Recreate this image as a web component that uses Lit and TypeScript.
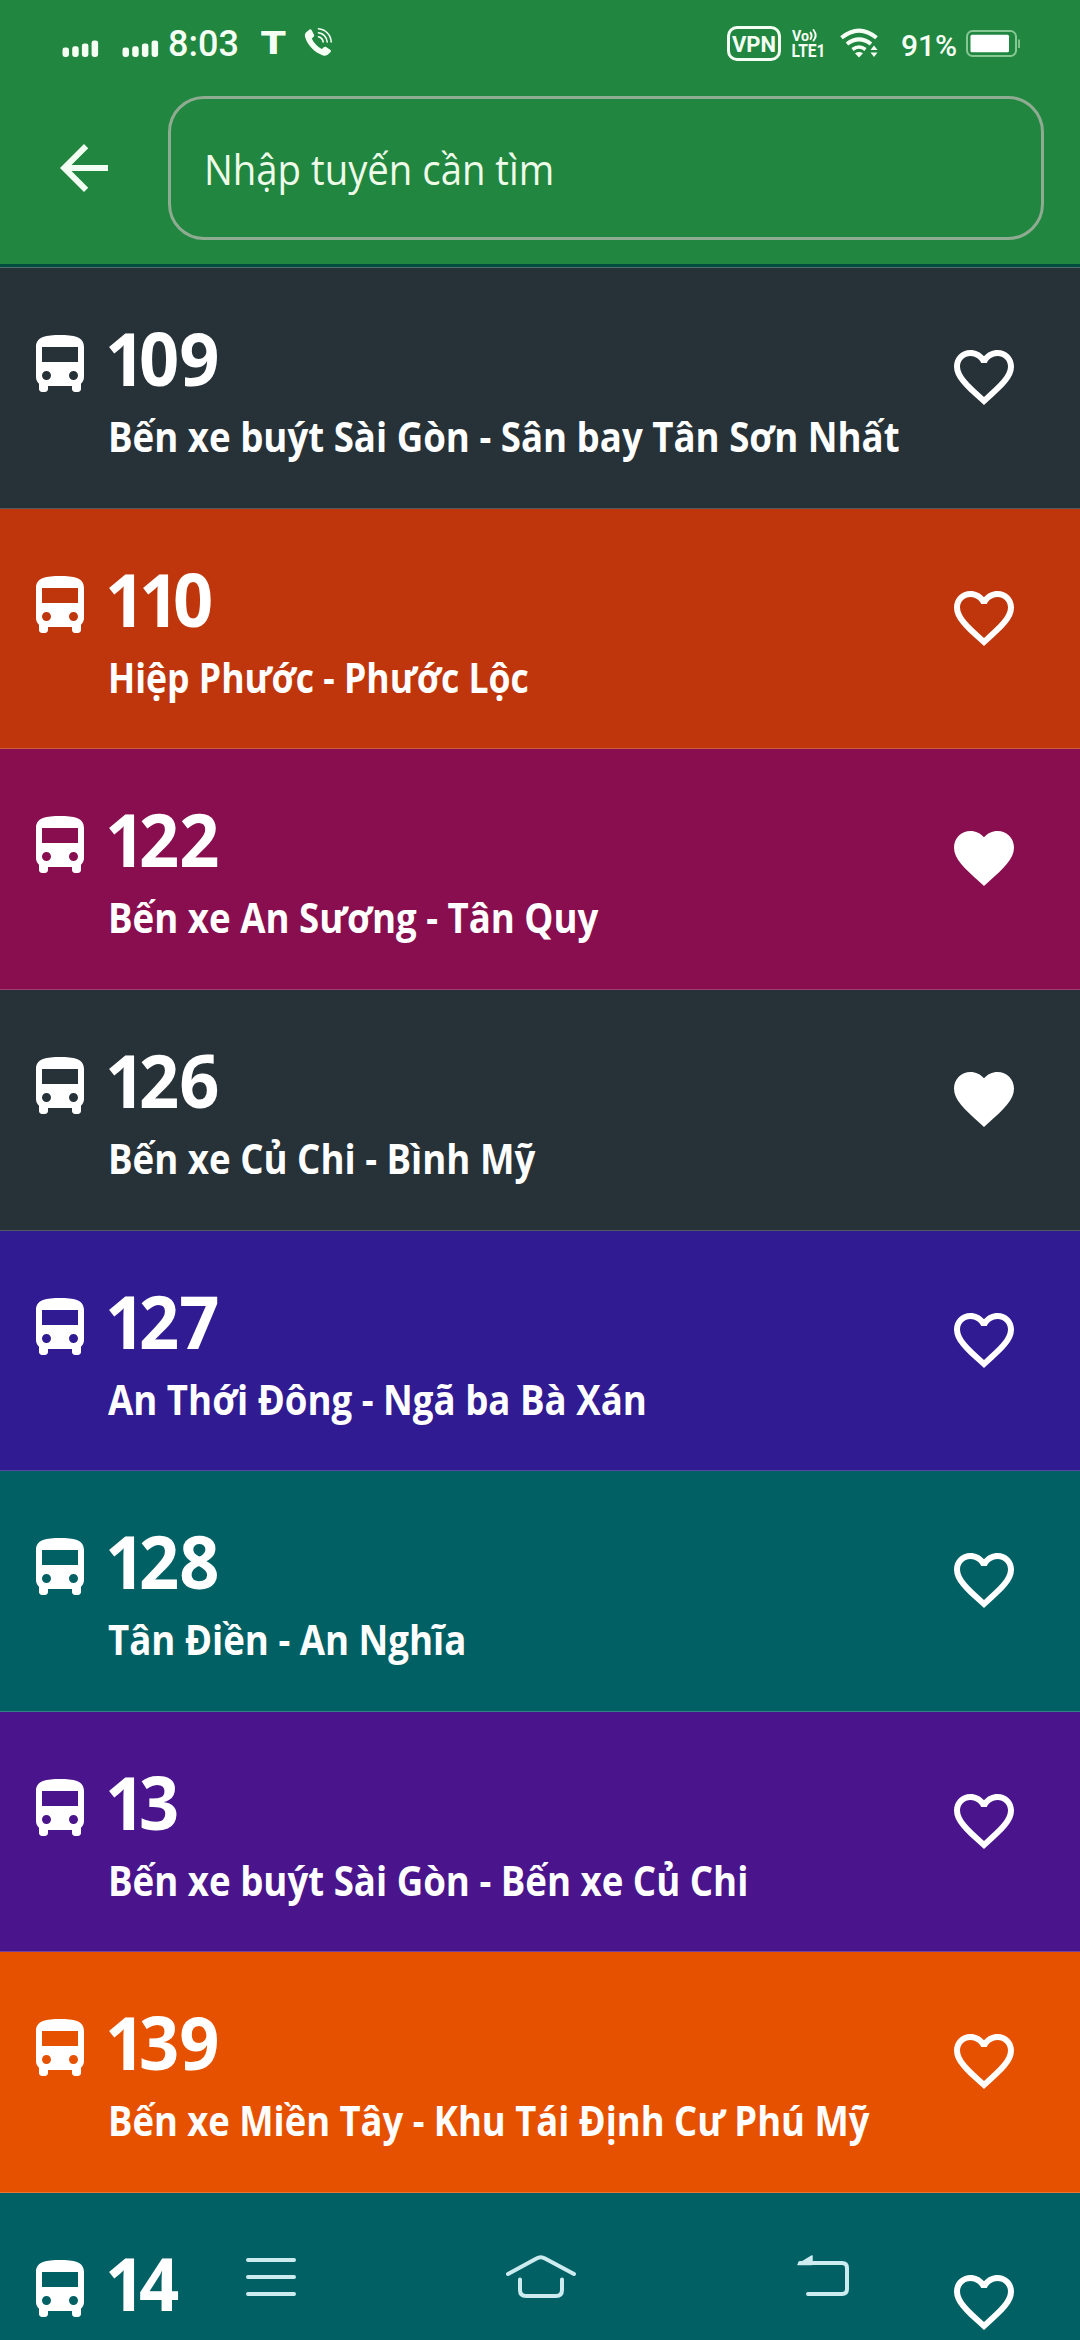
import { LitElement, html, css } from "lit";
import { customElement, property } from "lit/decorators.js";
import { styleMap } from "lit/directives/style-map.js";

interface Route {
  code: string;
  name: string;
  tone: string;
  liked?: boolean;
  stretch?: number;
}

const ROUTES: Route[] = [
  { code: "109", name: "Bến xe buýt Sài Gòn - Sân bay Tân Sơn Nhất", tone: "slate" },
  { code: "110", name: "Hiệp Phước - Phước Lộc", tone: "rust", stretch: 0.847 },
  { code: "122", name: "Bến xe An Sương - Tân Quy", tone: "wine", liked: true },
  { code: "126", name: "Bến xe Củ Chi - Bình Mỹ", tone: "slate", liked: true },
  { code: "127", name: "An Thới Đông - Ngã ba Bà Xán", tone: "indigo" },
  { code: "128", name: "Tân Điền - An Nghĩa", tone: "teal" },
  { code: "13", name: "Bến xe buýt Sài Gòn - Bến xe Củ Chi", tone: "purple" },
  { code: "139", name: "Bến xe Miền Tây - Khu Tái Định Cư Phú Mỹ", tone: "orange", stretch: 0.866 },
  { code: "14", name: "", tone: "teal" },
];

const HEART =
  "M12 21.35l-1.45-1.32C5.4 15.36 2 12.28 2 8.5 2 5.42 4.42 3 7.5 3c1.74 0 3.41.81 4.5 2.09C13.09 3.81 14.76 3 16.5 3 19.58 3 22 5.42 22 8.5c0 3.78-3.4 6.86-8.55 11.54L12 21.35z";
const HEART_OUTLINE =
  "M16.5 3c-1.74 0-3.41.81-4.5 2.09C10.91 3.81 9.24 3 7.5 3 4.42 3 2 5.42 2 8.5c0 3.78 3.4 6.86 8.55 11.54L12 21.35l1.45-1.32C18.6 15.36 22 12.28 22 8.5 22 5.42 19.58 3 16.5 3zm-4.4 15.55l-.1.1-.1-.1C7.14 14.24 4 11.39 4 8.5 4 6.5 5.5 5 7.5 5c1.54 0 3.04.99 3.57 2.36h1.87C13.46 5.99 14.96 5 16.5 5c2 0 3.5 1.5 3.5 3.5 0 2.89-3.14 5.74-7.9 10.05z";
const BUS =
  "M4 16c0 .88.39 1.67 1 2.22V20c0 .55.45 1 1 1h1c.55 0 1-.45 1-1v-1h8v1c0 .55.45 1 1 1h1c.55 0 1-.45 1-1v-1.78c.61-.55 1-1.34 1-2.22V6c0-3.5-3.58-4-8-4s-8 .5-8 4v10zm3.5 1c-.83 0-1.5-.67-1.5-1.5S6.67 14 7.5 14s1.5.67 1.5 1.5S8.33 17 7.5 17zm9 0c-.83 0-1.5-.67-1.5-1.5s.67-1.5 1.5-1.5 1.5.67 1.5 1.5-.67 1.5-1.5 1.5zm1.5-6H6V6h12v5z";
const BACK = "M20 11H7.83l5.59-5.59L12 4l-8 8 8 8 1.41-1.41L7.83 13H20v-2z";

@customElement("status-bar")
class StatusBar extends LitElement {
  static styles = css`
    :host {
      display: flex;
      justify-content: space-between;
      height: 88px;
      box-sizing: border-box;
      padding: 0 59px 0 62px;
      color: #f6fff4;
      font-family: Roboto, "Liberation Sans", sans-serif;
      line-height: 1;
    }
    .group { display: flex; align-items: center; height: 86px; }
    .signal { display: block; width: 37px; height: 17px; margin: 11px 0 0; }
    .second { margin-left: 23px; }
    .time { font-size: 36px; font-weight: 500; margin: 2px 0 0 9px; width: 93px; }
    .tee {
      width: 25px;
      font: 700 32px/1 "DejaVu Sans", sans-serif;
      margin-right: 18px;
      transform: scaleX(1.13);
      transform-origin: 0 0;
    }
    .phone { width: 30px; height: 30px; display: block; margin-top: -3px; }
    .vpn {
      box-sizing: border-box;
      width: 54px;
      height: 35px;
      border: 3px solid currentColor;
      border-radius: 10px;
      text-align: center;
      font-size: 22px;
      font-weight: 700;
      line-height: 31px;
    }
    .volte { display: block; width: 36px; height: 34px; margin: 2px 0 0 10px; overflow: visible; }
    .wifi { display: block; width: 38px; height: 30px; margin-left: 13px; }
    .percent { font-size: 30px; font-weight: 500; margin: 5px 0 0 23px; width: 65px; }
    .battery { display: block; width: 55px; height: 27px; margin-top: 1px; }
  `;

  private signal(extra: string) {
    return html`<svg class="signal ${extra}" viewBox="0 0 37 17" fill="currentColor">
      <rect x="0.5" y="7.5" width="6.5" height="9.5" rx="2.4" />
      <rect x="10.2" y="6.3" width="6.5" height="10.7" rx="2.4" />
      <rect x="19.9" y="3.4" width="6.5" height="13.6" rx="2.4" />
      <rect x="29.6" y="0.4" width="6.5" height="16.6" rx="2.4" />
    </svg>`;
  }

  render() {
    return html`
      <div class="group">
        ${this.signal("")} ${this.signal("second")}
        <span class="time">8:03</span>
        <span class="tee">T</span>
        <svg class="phone" viewBox="0 0 30 30" fill="none" stroke="currentColor">
          <path
            fill="currentColor"
            stroke="none"
            d="M2.2 5.2 5.3 2.7C6.2 2 7.2 2.3 7.7 3.2L10 7.8C10.4 8.7 10.1 9.4 9.4 9.9L7.8 11.5C9.4 15.6 13.2 19.6 17.8 21.9L19.8 20.3C20.5 19.6 21.3 19.5 22.1 20L26.2 22.8C27.1 23.4 27.2 24.2 26.6 25L24 27.6C22.7 28.8 21 29 19 28.4C10.5 25.7 3.2 18 1 9.8C.6 7.9 1 6.3 2.2 5.2Z"
          />
          <path stroke-width="1.6" stroke-linecap="round" d="M14.5 9.8C17 10.5 18.8 12.5 19.2 15M14.5 5.8C19 6.5 22.5 10 23.2 15M14.5 1.8C21.5 2.3 27 8 27.2 15" />
        </svg>
      </div>
      <div class="group">
        <span class="vpn">VPN</span>
        <svg class="volte" viewBox="0 0 36 34" fill="currentColor">
          <text x="1" y="13.5" font-size="14" font-weight="700" textLength="17" lengthAdjust="spacingAndGlyphs">Vo</text>
          <path d="M19.5 5.5q2.2 3.2 0 6.5M22.5 3q4.3 5.6 0 10.5" fill="none" stroke="currentColor" stroke-width="1.9" stroke-linecap="round" />
          <text x="0.5" y="29.5" font-size="18" font-weight="700" textLength="34" lengthAdjust="spacingAndGlyphs">LTE1</text>
        </svg>
        <svg class="wifi" viewBox="0 0 38 30" fill="none" stroke="currentColor" stroke-width="4">
          <path d="M1.5 9.8Q19 -4.5 36.5 9.8" />
          <path d="M7 16Q19 6.8 31 16" />
          <path d="M12.5 21.5Q19 16.5 25.5 21.5" stroke-width="3.6" />
          <path d="M15 25.3Q19 22.8 23 25.3L19 29.5Z" fill="currentColor" stroke="none" />
          <path d="M30.5 22 34 17.5 37.5 22ZM30.5 24.5 34 29 37.5 24.5Z" fill="currentColor" stroke="none" />
        </svg>
        <span class="percent">91%</span>
        <svg class="battery" viewBox="0 0 55 27">
          <rect x="1" y="1" width="49" height="25" rx="5.5" fill="none" stroke="#86c893" stroke-width="2" />
          <rect x="4.5" y="4.8" width="38.5" height="17.4" rx="1.5" fill="#fff" />
          <rect x="52" y="9.5" width="2" height="8.5" fill="#7cc08a" />
        </svg>
      </div>
    `;
  }
}

@customElement("route-row")
class RouteRow extends LitElement {
  @property({ attribute: false }) route!: Route;

  static styles = css`
    :host { display: block; }
    .row {
      display: flex;
      align-items: flex-start;
      box-sizing: border-box;
      height: 240.65px;
      padding: 61px 60px 0 24px;
      color: #fff;
      font-family: "Open Sans", "Noto Sans", sans-serif;
      border-bottom: 1px solid rgba(255, 255, 255, 0.2);
    }
    .slate { background: #263238; }
    .rust { background: #bf360c; }
    .wine { background: #880e4f; }
    .indigo { background: #311b92; }
    .teal { background: #006064; }
    .purple { background: #4a148c; }
    .orange { background: #e65100; }
    .icon { flex: none; display: block; width: 72px; height: 72px; fill: currentColor; }
    .texts { flex: 1; min-width: 0; padding-left: 12px; white-space: nowrap; }
    .code {
      height: 72px;
      margin: -7px 0 0 -3px;
      font-size: 74px;
      font-weight: 700;
      line-height: 72px;
      transform: scaleX(0.95);
      transform-origin: 0 0;
    }
    .one { letter-spacing: -6.5px; }
    .name {
      margin-top: 12px;
      font-size: 42px;
      font-weight: 700;
      line-height: 60px;
      transform: scaleX(0.872);
      transform-origin: 0 0;
    }
    .heart { margin-top: 12px; }
  `;

  render() {
    const r = this.route;
    const digits = [...r.code].map((d) => (d === "1" ? html`<span class="one">1</span>` : d));
    const fit = r.stretch ? { transform: `scaleX(${r.stretch})` } : {};
    return html`<div class="row ${r.tone}">
      <svg class="icon" viewBox="0 0 24 24"><path d=${BUS} /></svg>
      <div class="texts">
        <div class="code">${digits}</div>
        <div class="name" style=${styleMap(fit)}>${r.name}</div>
      </div>
      <svg class="icon heart" viewBox="0 0 24 24"><path d=${r.liked ? HEART : HEART_OUTLINE} /></svg>
    </div>`;
  }
}

@customElement("app-root")
class AppRoot extends LitElement {
  static styles = css`
    :host {
      display: block;
      position: relative;
      width: 1080px;
      height: 2340px;
      overflow: hidden;
      background: #004d40;
    }
    .top { height: 264px; background: #218640; margin-bottom: 3px; }
    main { border-top: 1px solid #4b6f6a; }
    .search { display: flex; align-items: center; padding: 8px 36px 0 48px; }
    .back { width: 72px; height: 72px; fill: #f4fff4; display: block; }
    .field {
      flex: 1;
      box-sizing: border-box;
      height: 144px;
      margin-left: 48px;
      padding-left: 33px;
      border: 3px solid #8fab91;
      border-radius: 36px;
      font: 400 42px/139px "Open Sans", "Noto Sans", sans-serif;
      color: #eefbe9;
    }
    .hint { display: inline-block; white-space: nowrap; transform: scaleX(0.912); transform-origin: 0 0; }
    .nav {
      position: absolute;
      left: 0;
      right: 0;
      bottom: 0;
      height: 126px;
      display: flex;
      justify-content: space-between;
      padding: 0 226px 0 236px;
      align-items: center;
    }
    .key {
      display: block;
      width: 70px;
      height: 60px;
      fill: none;
      stroke: #cdecf0;
      stroke-width: 4;
      stroke-linecap: round;
      stroke-linejoin: round;
      overflow: visible;
    }
  `;

  render() {
    return html`
      <header class="top">
        <status-bar></status-bar>
        <div class="search">
          <svg class="back" viewBox="0 0 24 24"><path d=${BACK} /></svg>
          <div class="field"><span class="hint">Nhập tuyến cần tìm</span></div>
        </div>
      </header>
      <main>${ROUTES.map((r) => html`<route-row .route=${r}></route-row>`)}</main>
      <nav class="nav">
        <svg class="key" viewBox="0 0 70 60"><path d="M12 13H58M12 30H58M12 47H58" /></svg>
        <svg class="key" viewBox="4 0 70 60">
          <path d="M2 27 30.5 11.5Q34.8 9 39 11.5L68 27M14 32.5V43Q14 49 20 49H50Q56 49 56 43V32.5" />
        </svg>
        <svg class="key" viewBox="0 0 70 60">
          <path d="M16 16H58Q63 16 63 21V42Q63 47 58 47H24" />
          <path d="M14 17.5 28 9V17.5Z" fill="#cdecf0" stroke-width="1.5" />
        </svg>
      </nav>
    `;
  }
}
